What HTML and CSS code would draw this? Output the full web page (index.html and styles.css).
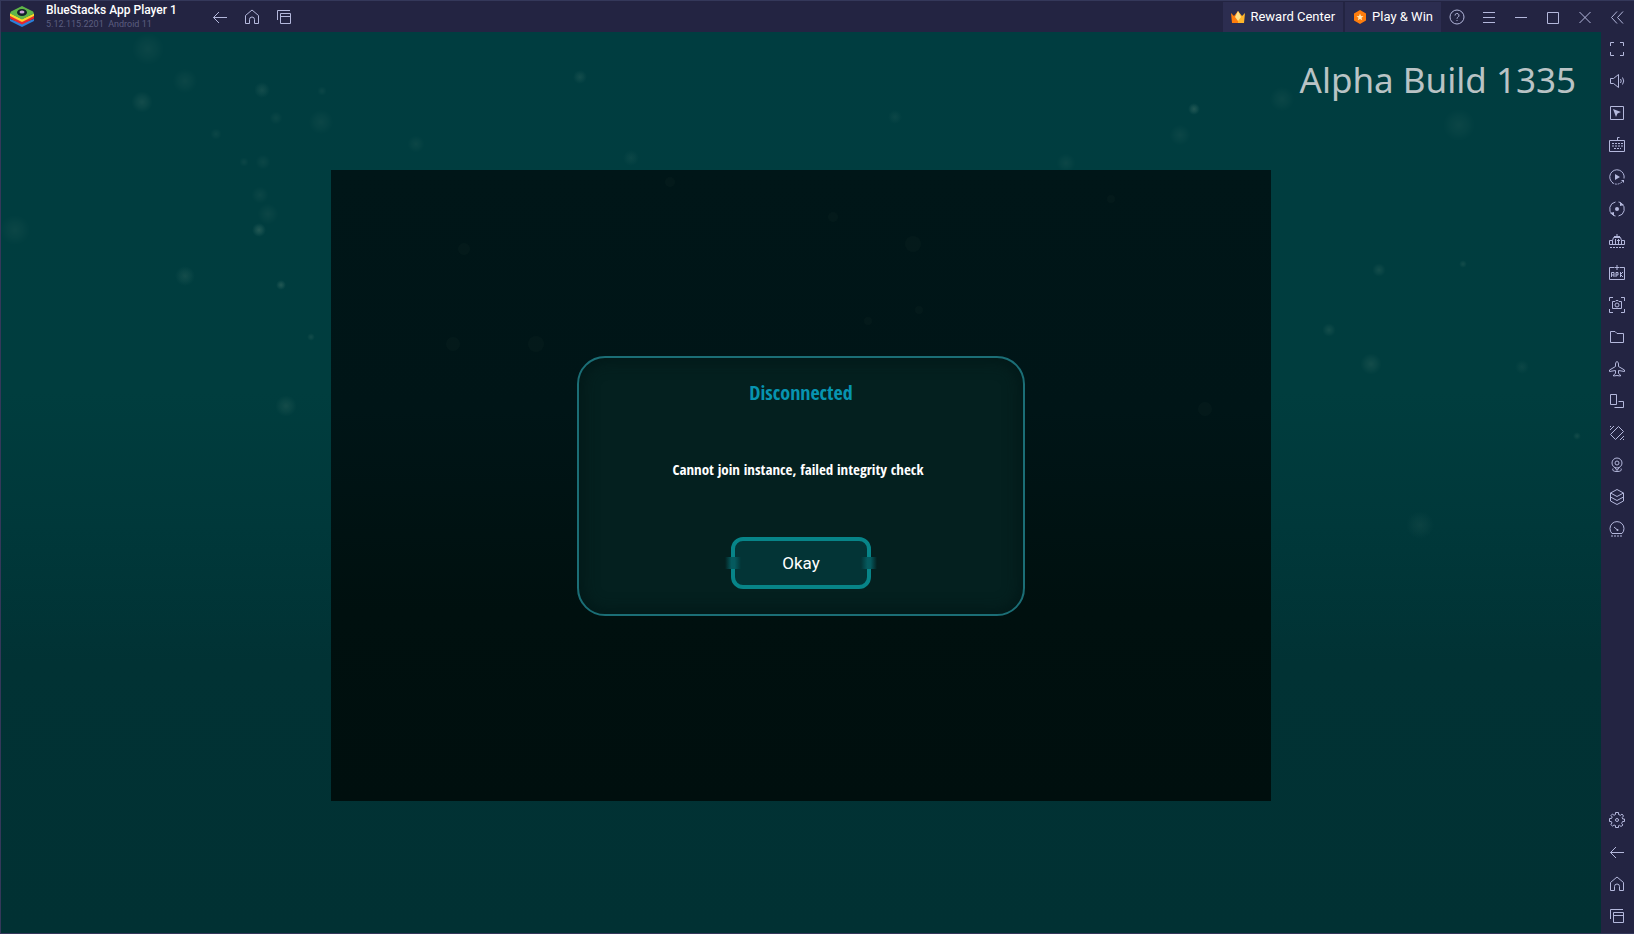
FILE: index.html
```html
<!DOCTYPE html>
<html lang="en">
<head>
<meta charset="utf-8">
<title>BlueStacks App Player 1</title>
<link rel="stylesheet" href="styles.css">
</head>
<body>
<div class="window">
  <header class="titlebar">
    <svg class="logo" viewBox="0 0 24 22" aria-hidden="true">
      <path d="M0 15l12 6 12-6v-2L12 17 0 13z" fill="#2a7fd8"/>
      <path d="M0 12.500l12 6 12-6v-2.500L12 15 0 10z" fill="#e8262d"/>
      <path d="M0 10l12 6 12-6V7.500L12 13 0 7z" fill="#fdd32a"/>
      <path d="M0 7.500l1-2L12 0l11 5.500 1 2-12 6z" fill="#5fb548"/>
      <ellipse cx="12" cy="6.500" rx="5" ry="3.500" fill="#14202b"/>
      <ellipse cx="12" cy="6" rx="2.500" ry="1.500" fill="#c9a2d8"/>
    </svg>
    <div class="app-name">
      <h1>BlueStacks App Player 1</h1>
      <p>5.12.115.2201&nbsp; Android 11</p>
    </div>
    <nav class="tools">
      <button aria-label="Back"><svg viewBox="0 0 16 16"><path d="M15 8.500H1.500M7 3L1.500 8.500 7 14"/></svg></button>
      <button aria-label="Home"><svg viewBox="0 0 16 16"><path d="M1.500 6.500L8 1l6.500 5.500v8h-4v-4a2.500 2.500 0 0 0-5 0v4h-4z"/></svg></button>
      <button aria-label="Recent apps"><svg viewBox="0 0 16 16"><path d="M1.500 11V1.500H14M4.500 4.500h10v10h-10zM4.500 7.500h10"/></svg></button>
    </nav>
    <div class="promos">
      <button class="promo">
        <svg viewBox="0 0 14 14" aria-hidden="true"><path d="M0 3l3 3 4-5v12H1z" fill="#ff7d0c"/><path d="M14 3l-3 3-4-5v12h6z" fill="#ffb52b"/><path d="M7 1L4 7l3 4 3-4z" fill="#ffe28a"/></svg>
        Reward Center</button>
      <button class="promo">
        <svg viewBox="0 0 14 14" aria-hidden="true"><path d="M7 0l6 3.500v7L7 14l-6-3.500v-7z" fill="#ff7d0c"/><path d="M7 3.500l1 2.500 2.500.2-2 1.600.7 2.500L7 9l-2.200 1.300.7-2.500-2-1.600L6 6z" fill="#ffe9b8"/></svg>
        Play &amp; Win</button>
    </div>
    <div class="tools">
      <button aria-label="Help"><svg viewBox="0 0 16 16"><circle cx="8" cy="8" r="7"/><path d="M6 6.500a2 2 0 1 1 3 1.700q-1 .6-1 1.500M8 11v1"/></svg></button>
      <button aria-label="Menu"><svg viewBox="0 0 16 16"><path d="M2 3.500h12M2 8.500h12M2 13.500h12"/></svg></button>
      <button aria-label="Minimize"><svg viewBox="0 0 16 16"><path d="M2 8.500h12"/></svg></button>
      <button aria-label="Maximize"><svg viewBox="0 0 16 16"><path d="M2.500 3.500h11v11h-11z"/></svg></button>
      <button aria-label="Close"><svg viewBox="0 0 16 16"><path d="M2.500 3l11 11M13.500 3l-11 11"/></svg></button>
      <button aria-label="Collapse sidebar"><svg viewBox="0 0 16 16"><path d="M8 2.500L2.500 8.500 8 14.500M14 2.500L8.500 8.500l5.500 6"/></svg></button>
    </div>
  </header>

  <div class="body">
    <main class="game">
      <svg class="particles" viewBox="0 0 1600 901" preserveAspectRatio="xMidYMid slice" aria-hidden="true">
        <defs><radialGradient id="mote"><stop offset="0" stop-color="#7a9a88" stop-opacity=".75"/><stop offset=".5" stop-color="#5c8a7c" stop-opacity=".5"/><stop offset="1" stop-color="#4b8078" stop-opacity="0"/></radialGradient></defs>
        <g fill="url(#mote)">
          <g opacity=".13">
            <circle cx="147" cy="17" r="17"/><circle cx="184" cy="49" r="13"/><circle cx="14" cy="198" r="16"/><circle cx="320" cy="90" r="13"/><circle cx="267" cy="182" r="11"/>
            <circle cx="262" cy="130" r="8"/><circle cx="243" cy="130" r="5"/><circle cx="215" cy="102" r="6"/><circle cx="275" cy="86" r="7"/><circle cx="321" cy="59" r="5"/><circle cx="259" cy="163" r="9"/>
            <circle cx="1179" cy="103" r="11"/><circle cx="1281" cy="67" r="13"/><circle cx="1458" cy="93" r="17"/><circle cx="1521" cy="335" r="7"/><circle cx="1065" cy="131" r="10"/><circle cx="630" cy="126" r="8"/><circle cx="415" cy="112" r="9"/><circle cx="894" cy="85" r="7"/>
            <circle cx="1419" cy="493" r="14"/>
          </g>
          <g opacity=".22">
            <circle cx="141" cy="70" r="11"/><circle cx="261" cy="58" r="8"/><circle cx="184" cy="244" r="10"/><circle cx="285" cy="374" r="11"/><circle cx="310" cy="305" r="4"/><circle cx="579" cy="45" r="7"/><circle cx="1370" cy="332" r="11"/><circle cx="1378" cy="238" r="7"/><circle cx="1328" cy="298" r="7"/><circle cx="1462" cy="232" r="4"/><circle cx="1576" cy="404" r="4"/>
          </g>
          <g opacity=".38"><circle cx="258" cy="198" r="7"/><circle cx="280" cy="253" r="5"/><circle cx="1193" cy="77" r="6"/></g>
        </g>
      </svg>
      <p class="build">Alpha Build 1335</p>
      <div class="backdrop">
        <svg class="dim-particles" viewBox="0 0 940 631" preserveAspectRatio="xMidYMid slice" aria-hidden="true">
          <g fill="#48706a" fill-opacity=".05">
            <circle cx="339" cy="12" r="5"/><circle cx="582" cy="74" r="8"/><circle cx="502" cy="47" r="5"/><circle cx="133" cy="79" r="6"/><circle cx="122" cy="174" r="7"/><circle cx="205" cy="174" r="8"/><circle cx="588" cy="140" r="4"/><circle cx="537" cy="151" r="4"/><circle cx="874" cy="239" r="7"/><circle cx="780" cy="29" r="4"/>
          </g>
        </svg>
        <section class="dialog" role="dialog" aria-labelledby="dialog-title">
          <h2 id="dialog-title">Disconnected</h2>
          <p>Cannot join instance, failed integrity check</p>
          <button class="okay">Okay</button>
        </section>
      </div>
    </main>

    <aside class="sidebar">
      <div class="tools column">
        <button aria-label="Full screen"><svg viewBox="0 0 16 16"><path d="M1.500 5V1.500H5M11 1.500h3.500V5M14.500 11v3.500H11M5 14.500H1.500V11"/></svg></button>
        <button aria-label="Volume"><svg viewBox="0 0 16 16"><path d="M1.500 5.500h3l5-4v13l-5-4h-3zM11.500 6q1.500 2 0 4M13.500 4.500q2.500 3.500 0 7"/></svg></button>
        <button aria-label="Lock cursor"><svg viewBox="0 0 16 16"><path d="M1.500 1.500h13v13h-13z"/><path class="solid" d="M4 4l8 3-3.500 1.500L7 12z"/></svg></button>
        <button aria-label="Game controls"><svg viewBox="0 0 16 16"><path d="M.5 3.500h15v11H.5zM8.500 3V.5h2"/><path class="dots" d="M3 6.500h11M3 9h11M5 11.500h7"/></svg></button>
        <button aria-label="Macro recorder"><svg viewBox="0 0 16 16"><path d="M4 14A7.200 7.200 0 1 1 15 9.500"/><path class="dots" d="M3 13.500Q8 17 13 13"/><path class="solid" d="M6 5l5 3-5 3zM12 11h3v3z"/></svg></button>
        <button aria-label="Sync operations"><svg viewBox="0 0 16 16"><path d="M6.500 1A7 7 0 0 0 3.500 13.500M9.500 15A7 7 0 0 0 12.500 2.500M6.500 15q-2 0-3.500-2M9.500 1q2 0 3.500 2"/><circle class="solid" cx="8" cy="8" r="2"/><path class="solid" d="M1 12l4-1v4zM15 4l-4 1V1z"/></svg></button>
        <button aria-label="Multi-instance manager"><svg viewBox="0 0 16 16"><path d="M3 11.500H.5V7.500h3M13 11.500h2.500V7.500h-3M3 11.500h10M3.500 11V7.500l1-3h7l1 3V11M8 1v3M5 3.500h6M6.500 6v5M9.500 6v5M8 7.500h3"/><path class="dots" d="M1 14.500h14"/></svg></button>
        <button aria-label="Install APK"><svg viewBox="0 0 16 16"><path d="M5 2.500H.5v12h15v-12H11M8 0v5M5.500 2.500h5M2.500 12V7.500H5V12M2.500 10H5M7 12V7.500h2V10H7M11.500 7v5M14 7l-2.500 2.500L14 12"/></svg></button>
        <button aria-label="Screenshot"><svg viewBox="0 0 16 16"><path d="M.5 4V.5H4M12 .5h3.500V4M15.500 12v3.500H12M4 15.500H.5V12M3.500 4.500H6l1-1h2l1 1h2.500v7h-9z"/><circle cx="8" cy="8" r="2"/></svg></button>
        <button aria-label="Media folder"><svg viewBox="0 0 16 16"><path d="M1.500 2.500H6l2 2h6.500v9h-13z"/></svg></button>
        <button aria-label="Airplane mode"><svg viewBox="0 0 16 16"><path d="M8 .5Q6.500 1 6.500 3v2.500L.5 9v1.500l6-1v3l-2 1.500v1l3.500-.5 3.500.5v-1l-2-1.500v-3l6 1V9l-6-3.500V3Q9.500 1 8 .5z"/></svg></button>
        <button aria-label="Rotate screen"><svg viewBox="0 0 16 16"><path d="M1.500 1.500h6v10h-6zM9.500 8.500h5v6h-9"/></svg></button>
        <button aria-label="Shake"><svg viewBox="0 0 16 16"><path d="M9.500 1.500l5 5-8 8-5-5zM1 5l4-4M1 2l1-1M11 15l4-4M14 15l1-1"/></svg></button>
        <button aria-label="Set location"><svg viewBox="0 0 16 16"><circle cx="8" cy="6" r="5"/><circle cx="8" cy="6" r="2"/><path d="M5.500 10L8 13.500l2.500-3.500M4 11.500q-1.500 3 4 3t4-3"/></svg></button>
        <button aria-label="Eco mode"><svg viewBox="0 0 16 16"><path d="M8 .5l6.500 3.500L8 7.500 1.500 4zM1.500 4v8L8 15.500l6.500-3.500V4M1.500 8L8 11.500 14.500 8"/></svg></button>
        <button aria-label="Performance"><svg viewBox="0 0 16 16"><path d="M3 12.500h10A7 7 0 1 0 3 12.500zM5 6l3.500 3"/><circle class="solid" cx="8.500" cy="9" r="1"/><path class="dots" d="M2 15h12"/></svg></button>
      </div>
      <div class="tools column">
        <button aria-label="Settings"><svg viewBox="0 0 16 16"><path d="M6.500.5h3v2l2 .8L13 2l1.500 2-1.300 1.500.5 1.500h1.800v2.500h-2l-.8 2L14 13l-2 1.500-1.500-1.200-1 .4v1.800h-3v-2l-1.500-.5L3.500 14 1.800 12.500 3 11l-.7-1.500H.5v-3h2L3.200 5 2 3.500 3.500 2l1.500 1.300 1.500-.8z"/><circle cx="8" cy="8" r="1.500"/></svg></button>
        <button aria-label="Android back"><svg viewBox="0 0 16 16"><path d="M15 8.500H1.500M7 3L1.500 8.500 7 14"/></svg></button>
        <button aria-label="Android home"><svg viewBox="0 0 16 16"><path d="M1.500 6.500L8 1l6.500 5.500v8h-4v-4a2.500 2.500 0 0 0-5 0v4h-4z"/></svg></button>
        <button aria-label="Android recent apps"><svg viewBox="0 0 16 16"><path d="M1.500 11V1.500H14M4.500 4.500h10v10h-10zM4.500 7.500h10"/></svg></button>
      </div>
    </aside>
  </div>
</div>
</body>
</html>
```
FILE: styles.css
```css
* { box-sizing: border-box; }

body {
  margin: 0;
  font-family: Roboto, sans-serif;
  color: #fff;
}

h1, h2, p { margin: 0; }

button {
  margin: 0;
  padding: 0;
  border: 0;
  background: none;
  color: inherit;
  font: inherit;
}

.window {
  display: flex;
  flex-direction: column;
  height: 100vh;
  background: #232442;
  border: 1px solid #34385a;
  border-right: 0;
}

.titlebar {
  display: flex;
  align-items: center;
  flex: none;
  height: 31px;
  padding-right: 1px;
}

.logo {
  width: 24px;
  height: 22px;
  margin-left: 9px;
}

.app-name {
  width: 158px;
  margin-left: 12px;
  white-space: nowrap;
}

.app-name h1 {
  font-size: 12px;
  font-weight: 500;
  line-height: 15px;
}

.app-name p {
  font-size: 9px;
  line-height: 12px;
  color: #5b5e80;
}

.tools { display: flex; }

.tools button {
  display: grid;
  place-items: center;
  width: 32px;
  height: 32px;
}

.titlebar .tools button { height: 30px; }

.tools svg {
  width: 16px;
  height: 16px;
  fill: none;
  stroke: #b4b8dc;
  stroke-width: 1;
}

.tools .solid { fill: #b4b8dc; stroke: none; }
.tools .dots { stroke-dasharray: 2 1; }

.column { flex-direction: column; }

.promos {
  display: flex;
  gap: 2px;
  margin-left: auto;
  height: 30px;
}

.promo {
  display: flex;
  align-items: center;
  gap: 5px;
  padding: 0 8px;
  background: #2c2d50;
  font-size: 13px;
}

.promo svg { width: 14px; height: 14px; }

.body {
  display: flex;
  flex: 1;
  min-height: 0;
}

.game {
  position: relative;
  display: grid;
  place-items: center;
  flex: 1;
  padding-top: 6px;
  background: linear-gradient(#003d40 0%, #003d3e 40%, #00383a 55%, #013234 70%, #013133 100%);
}

.particles {
  position: absolute;
  inset: 0;
  width: 100%;
  height: 100%;
}

.build {
  position: absolute;
  top: 24px;
  right: 25px;
  font-family: "Noto Sans", sans-serif;
  font-size: 35px;
  line-height: 48px;
  color: #b9c3c5;
}

.backdrop {
  position: relative;
  display: grid;
  place-items: center;
  width: 58.75%;
  height: 70.5%;
  background: linear-gradient(#001618 0%, #001517 38%, #00100f 70%, #000f0e 100%);
}

.dim-particles {
  position: absolute;
  inset: 0;
  width: 100%;
  height: 100%;
}

.dialog {
  position: relative;
  display: flex;
  flex-direction: column;
  align-items: center;
  width: 448px;
  padding: 23px 24px 25px;
  border: 2px solid #1b6e76;
  border-radius: 28px;
  background: #04201f;
  box-shadow: inset 0 0 18px #021515;
  font-family: "Open Sans Condensed", "Roboto Condensed", "Liberation Sans Narrow", sans-serif;
}

.dialog h2 {
  font-size: 20px;
  font-weight: 400;
  line-height: 24px;
  color: #0794b0;
}

.dialog p {
  margin: 54px 6px 58px 0;
  font-size: 15px;
  font-weight: 700;
  line-height: 20px;
}

.okay {
  position: relative;
  width: 140px;
  height: 52px;
  border: 4px solid #078488;
  border-radius: 12px;
  background: #033436;
  font-family: Roboto, sans-serif;
  font-size: 17px;
}

.okay::before,
.okay::after {
  content: "";
  position: absolute;
  top: 16px;
  width: 16px;
  height: 12px;
  background: linear-gradient(90deg, transparent, #055a5e 40%, #055a5e 60%, transparent);
}

.okay::before { left: -10px; }
.okay::after { right: -10px; }

.sidebar {
  display: flex;
  flex-direction: column;
  justify-content: space-between;
  width: 33px;
  padding: 1px 0;
}
```
